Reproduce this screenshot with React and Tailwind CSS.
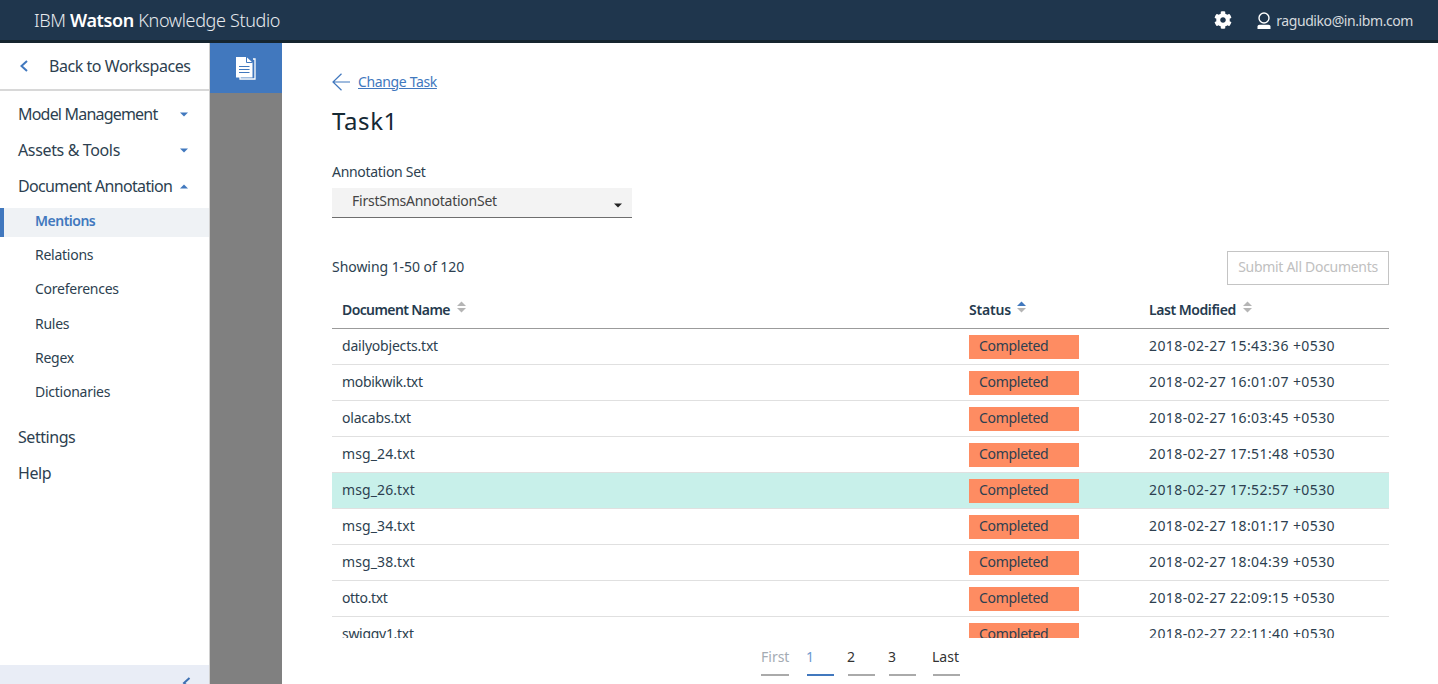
import React from "react";
import { FaCog } from "react-icons/fa";

const rows = [
  ["dailyobjects.txt", "2018-02-27 15:43:36 +0530", false, "tracking-[-0.2px]"],
  ["mobikwik.txt", "2018-02-27 16:01:07 +0530", false, "tracking-[-0.33px]"],
  ["olacabs.txt", "2018-02-27 16:03:45 +0530", false, "tracking-[-0.2px]"],
  ["msg_24.txt", "2018-02-27 17:51:48 +0530", false, "tracking-[0.1px]"],
  ["msg_26.txt", "2018-02-27 17:52:57 +0530", true, "tracking-[0.1px]"],
  ["msg_34.txt", "2018-02-27 18:01:17 +0530", false, "tracking-[0.1px]"],
  ["msg_38.txt", "2018-02-27 18:04:39 +0530", false, "tracking-[0.1px]"],
  ["otto.txt", "2018-02-27 22:09:15 +0530", false, "tracking-[-0.35px]"],
  ["swiggy1.txt", "2018-02-27 22:11:40 +0530", false, "tracking-[-0.3px]"],
];

function Caret({ up }) {
  return (
    <svg width="8" height="5" viewBox="0 0 8 5" className="text-[#4178be] shrink-0">
      <path d={up ? "M0 4.5 L4 0.5 L8 4.5 Z" : "M0 0.5 L8 0.5 L4 4.5 Z"} fill="currentColor" />
    </svg>
  );
}

function Sort({ active, gap = "ml-[6px]" }) {
  return (
    <svg width="9" height="12" viewBox="0 0 9 12" className={`${gap} mb-[4px] shrink-0`}>
      <path d="M0 5 L4.5 0.5 L9 5 Z" fill={active ? "#4178be" : "#b5b5b5"} />
      <path d="M0 7 L9 7 L4.5 11.5 Z" fill="#b5b5b5" />
    </svg>
  );
}

function NavItem({ label, up, open, track = "tracking-[-0.45px]" }) {
  return (
    <div className={`h-9 flex items-center justify-between pl-[18px] pr-[21px] text-[16px] text-[#2d3f50] ${track}`}>
      <span className="whitespace-nowrap">{label}</span>
      {open !== false && <Caret up={up} />}
    </div>
  );
}

function SubItem({ label }) {
  return <div className="h-[34.25px] flex items-center pl-[35px] text-[14px] tracking-[-0.25px] text-[#2d3f50]">{label}</div>;
}

function Page({ label, cls = "text-[#333]", line = "bg-[#aaaaaa]", w, shift = "-ml-[1px]" }) {
  return (
    <div className={`flex flex-col items-start ${w}`}>
      <span className={`text-[14px] leading-[18px] ${shift} ${cls}`}>{label}</span>
      <span className={`mt-[8px] h-[2px] w-full ${line}`} />
    </div>
  );
}

export default function App() {
  return (
    <div className="h-[684px] w-[1438px] overflow-hidden flex flex-col bg-white font-['Noto_Sans',sans-serif]">
      <header className="h-[43px] shrink-0 bg-[#1f364d] border-b-[3px] border-[#15252f] flex items-center justify-between pl-[34px] pr-[25px] text-white">
        <div className="text-[18px] font-light text-[#e6eaee] tracking-[-0.35px]">
          IBM <span className="font-semibold text-white">Watson</span> Knowledge Studio
        </div>
        <div className="flex items-center">
          <FaCog className="text-white w-[18px] h-[18px]" />
          <svg width="14" height="17" viewBox="0 0 14 17" className="ml-[25px] mr-[5px]">
            <circle cx="7" cy="6" r="5" fill="none" stroke="#fff" strokeWidth="1.4" />
            <path d="M0.5 17 V14.5 Q0.5 12.8 2.5 12.8 H11.5 Q13.5 12.8 13.5 14.5 V17 Z" fill="#fff" />
          </svg>
          <span className="text-[14px] text-[#d5dade] tracking-[-0.42px]">ragudiko@in.ibm.com</span>
        </div>
      </header>
      <div className="flex-1 flex min-h-0">
        <aside className="w-[210px] shrink-0 border-r border-[#d0d0d0] flex flex-col">
          <div className="h-[48px] shrink-0 border-b-2 border-[#d8d8d8] flex items-center pl-[20px] text-[16px] tracking-[-0.45px] text-[#2d3f50]">
            <svg width="9" height="12" viewBox="0 0 9 12" className="mr-[20px]">
              <path d="M7 1 L1.5 6 L7 11" fill="none" stroke="#4178be" strokeWidth="2" />
            </svg>
            Back to Workspaces
          </div>
          <div className="pt-[5px]">
            <NavItem label="Model Management" track="tracking-[-0.8px]" />
            <NavItem label="Assets & Tools" track="tracking-[-0.36px]" />
            <NavItem label="Document Annotation" up track="tracking-[-0.65px]" />
          </div>
          <div className="mt-[4px] h-[29px] flex items-center pl-[31px] pb-[4px] border-l-4 border-[#4178be] bg-[#eff2f5] text-[14px] font-semibold tracking-[-0.5px] text-[#4178be]">Mentions</div>
          <div className="pt-[0.4px]">
            <SubItem label="Relations" />
            <SubItem label="Coreferences" />
            <SubItem label="Rules" />
            <SubItem label="Regex" />
            <SubItem label="Dictionaries" />
          </div>
          <div className="pt-[10.35px]">
            <NavItem label="Settings" open={false} />
            <NavItem label="Help" open={false} />
          </div>
          <div className="mt-auto h-[19px] bg-[#e9edf6] flex justify-end pr-[18px] overflow-hidden">
            <svg width="9" height="24" viewBox="0 0 9 24" className="shrink-0">
              <path d="M7.5 13 L2 18 L7.5 23" fill="none" stroke="#3d70b2" strokeWidth="2" />
            </svg>
          </div>
        </aside>
        <div className="w-[72px] shrink-0 bg-[#808080]">
          <div className="h-[50px] bg-[#4178be] flex items-center justify-center pr-[2px]">
            <svg width="21" height="24" viewBox="0 0 21 24">
              <path d="M18 3 H20 V23 H5 V21" fill="none" stroke="#fff" strokeWidth="1.3" />
              <path d="M1 1 H11.5 L17.5 6.5 V21.5 H1 Z" fill="#fff" />
              <path d="M11.5 1 V6.5 H17.5" fill="none" stroke="#4178be" strokeWidth="1" />
              <path d="M4 10.5 H14.5 M4 13.5 H14.5 M4 16.5 H14.5" stroke="#4178be" strokeWidth="1.2" />
            </svg>
          </div>
        </div>
        <main className="flex-1 min-w-0 pl-[50px] pr-[49px] flex flex-col text-[#2d3f50]">
          <div className="pt-[29px] flex items-center h-[49px]">
            <svg width="18" height="18" viewBox="0 0 18 18" className="mr-[8px]">
              <path d="M9.5 0.8 L1 9 L9.5 17.2 M1 9 H18" fill="none" stroke="#4178be" strokeWidth="1.2" />
            </svg>
            <a className="text-[14px] text-[#4178be] underline tracking-[-0.36px] -mt-[2px]">Change Task</a>
          </div>
          <h1 className="mt-[13px] text-[24px] leading-[32px] text-[#152935] tracking-[0.6px]">Task1</h1>
          <div className="mt-[25px] text-[14px] leading-[20px] text-[#2d3f50] tracking-[-0.3px]">Annotation Set</div>
          <div className="mt-[6px] w-[300px] h-[30px] bg-[#f3f3f3] border-b border-[#6e6e6e] flex items-center justify-between pl-[20px] pr-[10px] text-[14px] text-[#444] leading-[26px] tracking-[-0.24px]">
            <span className="-mt-[3px]">FirstSmsAnnotationSet</span>
            <svg width="8" height="5" viewBox="0 0 8 5" className="mt-[6px]"><path d="M0 0.5 L8 0.5 L4 4.5 Z" fill="#222" /></svg>
          </div>
          <div className="mt-[33px] h-[34px] flex items-center justify-between">
            <span className="text-[14px] text-[#2d3f50] tracking-[-0.05px] -mt-[4px]">Showing 1-50 of 120</span>
            <button className="w-[162px] h-[34px] border border-[#c4c4c4] text-[14px] text-[#c0c0c0] tracking-[-0.3px] pb-[4px]">Submit All Documents</button>
          </div>
          <div className="flex-1 min-h-0 flex flex-col mt-[7px]">
            <div className="h-[37px] shrink-0 border-b-[1.5px] border-[#9b9b9b] flex items-center pb-[2px] text-[14px] font-semibold text-[#253a4e]">
              <div className="w-[637px] pl-[10px] flex items-center tracking-[-0.6px]">Document Name<Sort gap="ml-[7px]" /></div>
              <div className="w-[180px] flex items-center tracking-[-0.2px]">Status<Sort active /></div>
              <div className="flex items-center tracking-[-0.45px]">Last Modified<Sort gap="ml-[7px]" /></div>
            </div>
            <div className="flex-1 min-h-0 overflow-hidden">
              {rows.map(([name, date, hl, track]) => (
                <div key={name} className={`h-9 shrink-0 border-b border-[#e0e0e0] flex items-center text-[14px] text-[#2d3f50] ${hl ? "bg-[#c8f0ea]" : ""}`}>
                  <div className={`w-[637px] pl-[10px] -mt-[2px] ${track}`}>{name}</div>
                  <div className="w-[180px]"><span className="w-[110px] h-6 block bg-[#fe8c62] pl-[10px] leading-[21px] tracking-[-0.3px] text-[#2d3f50]">Completed</span></div>
                  <div className="-mt-[2px] tracking-[0.4px]">{date}</div>
                </div>
              ))}
            </div>
            <div className="h-[46px] shrink-0 flex justify-center pt-[10px]">
              <Page label="First" cls="text-[#a4abb3]" w="w-[28px]" shift="ml-0" />
              <Page label="1" cls="text-[#6d99d0]" line="bg-[#4178be]" w="w-[27px] ml-[18px]" />
              <Page label="2" w="w-[27px] ml-[14px]" />
              <Page label="3" w="w-[27px] ml-[14px]" />
              <Page label="Last" w="w-[27px] ml-[17px]" />
            </div>
          </div>
        </main>
      </div>
    </div>
  );
}
